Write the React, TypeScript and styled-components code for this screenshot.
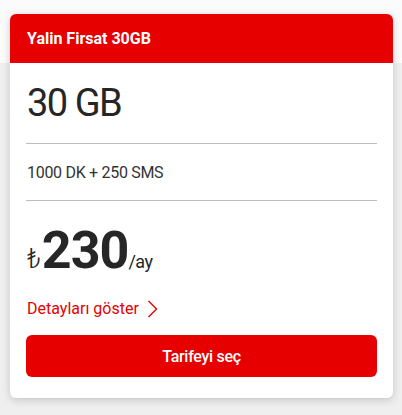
import React from "react";
import styled, { createGlobalStyle } from "styled-components";

const Global = createGlobalStyle`
  html, body { margin: 0; padding: 0; }
  body {
    background: linear-gradient(to bottom, #fbfbfb 0, #fbfbfb 63px, #efefef 63px, #efefef 100%);
    min-height: 415px;
    font-family: Roboto, "Noto Sans", sans-serif;
  }
`;

const Page = styled.div`
  padding: 14px 9px 14px 10px;
`;

const Card = styled.div`
  background: #fff;
  border-radius: 6px;
  box-shadow: 0 2px 8px rgba(0, 0, 0, 0.18);
  overflow: hidden;
`;

const Header = styled.div`
  height: 49px;
  background: #e60000;
  color: #fff;
  display: flex;
  align-items: center;
  padding-left: 17px;
  font-weight: 700;
  font-size: 16px;
`;

const Body = styled.div`
  padding: 0 16px 21px;
  display: flex;
  flex-direction: column;
`;

const Data = styled.div`
  font-size: 38px;
  color: #262626;
  height: 80px;
  display: flex;
  align-items: center;
  padding-left: 1px;
  letter-spacing: -1.5px;
`;

const Divider = styled.hr`
  border: 0;
  border-top: 1px solid #bebebe;
  margin: 0;
`;

const Minutes = styled.div`
  height: 56px;
  display: flex;
  align-items: center;
  font-size: 16px;
  color: #333;
  padding-left: 1px;
  letter-spacing: -0.3px;
`;

const Price = styled.div`
  display: flex;
  align-items: baseline;
  color: #262626;
  margin-top: 19px;
  padding-left: 1px;
`;

const Currency = styled.span`
  font-size: 27px;
  font-weight: 300;
`;

const Amount = styled.span`
  font-size: 52px;
  font-weight: 700;
  letter-spacing: -1px;
  margin-left: 1px;
`;

const Period = styled.span`
  font-size: 18px;
  letter-spacing: -0.5px;
`;

const DetailLink = styled.a`
  display: flex;
  align-items: center;
  gap: 8px;
  color: #e60000;
  font-size: 16px;
  margin-top: 18px;
  padding-left: 1px;
  text-decoration: none;
`;

const Button = styled.button`
  margin-top: 17px;
  height: 42px;
  border: 0;
  border-radius: 6px;
  background: #e60000;
  color: #fff;
  font-family: Roboto, "Noto Sans", sans-serif;
  font-size: 16px;
  font-weight: 500;
  letter-spacing: -0.3px;
`;

export default function App() {
  return (
    <>
      <Global />
      <Page>
        <Card>
          <Header>Yalin Firsat 30GB</Header>
          <Body>
            <Data>30 GB</Data>
            <Divider />
            <Minutes>1000 DK + 250 SMS</Minutes>
            <Divider />
            <Price>
              <Currency>₺</Currency>
              <Amount>230</Amount>
              <Period>/ay</Period>
            </Price>
            <DetailLink href="#">
              Detayları göster
              <svg width="11" height="18" viewBox="0 0 11 18" fill="none">
                <path d="M1.5 1 L9.5 9 L1.5 17" stroke="#e60000" strokeWidth="1.4" />
              </svg>
            </DetailLink>
            <Button>Tarifeyi seç</Button>
          </Body>
        </Card>
      </Page>
    </>
  );
}
